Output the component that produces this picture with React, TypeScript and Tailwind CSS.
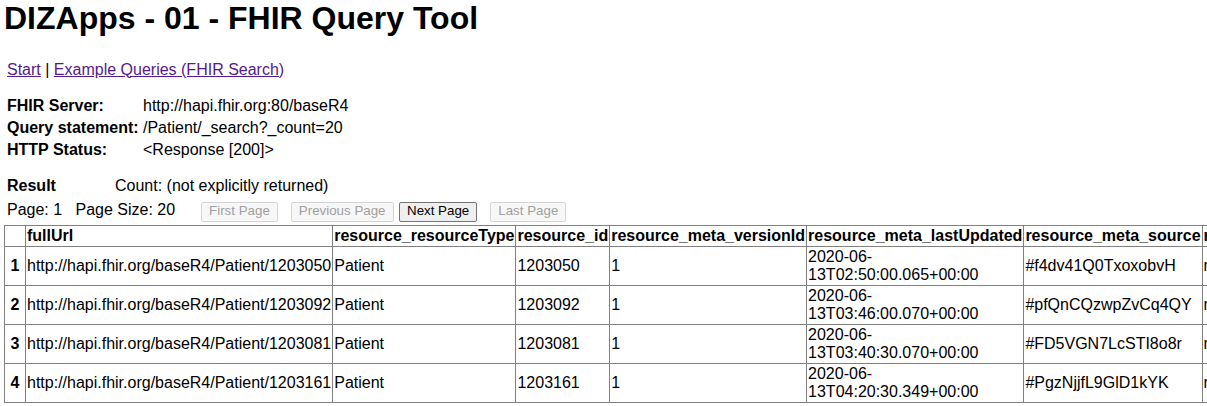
import React from 'react';

const rows = [
  { url: 'http://hapi.fhir.org/baseR4/Patient/1203050', id: '1203050', updated: ['2020-06-', '13T02:50:00.065+00:00'], source: '#f4dv41Q0TxoxobvH' },
  { url: 'http://hapi.fhir.org/baseR4/Patient/1203092', id: '1203092', updated: ['2020-06-', '13T03:46:00.070+00:00'], source: '#pfQnCQzwpZvCq4QY' },
  { url: 'http://hapi.fhir.org/baseR4/Patient/1203081', id: '1203081', updated: ['2020-06-', '13T03:40:30.070+00:00'], source: '#FD5VGN7LcSTI8o8r' },
  { url: 'http://hapi.fhir.org/baseR4/Patient/1203161', id: '1203161', updated: ['2020-06-', '13T04:20:30.349+00:00'], source: '#PgzNjjfL9GlD1kYK' },
];

const headers = [
  'fullUrl',
  'resource_resourceType',
  'resource_id',
  'resource_meta_versionId',
  'resource_meta_lastUpdated',
  'resource_meta_source',
  'resource_gender',
];

const cell = 'border border-[#808080] p-[1px]';

function PageButton({ label, disabled, className = '' }: { label: string; disabled?: boolean; className?: string }) {
  return (
    <button
      disabled={disabled}
      className={`rounded-[2px] border px-[7px] pt-0 pb-[3px] text-[13.33px] leading-[15px] ${
        disabled
          ? 'border-[#d5d5d5] bg-[#f7f7f7] text-[#a0a0a0]'
          : 'border-[#767676] bg-[#efefef] text-black'
      } ${className}`}
    >
      {label}
    </button>
  );
}

export default function App() {
  return (
    <div className="h-screen w-screen overflow-hidden bg-white font-['Liberation_Sans',Arial,sans-serif] text-base leading-[normal] text-black">
      <h1 className="ml-[4px] text-[32px] font-bold leading-[37px]">DIZApps - 01 - FHIR Query Tool</h1>

      {/* nav links */}
      <div className="mt-[23.5px] ml-[7px] leading-[18px]">
        <a href="#" className="text-[#551a8b] underline">Start</a> |{' '}
        <a href="#" className="text-[#551a8b] underline">Example Queries (FHIR Search)</a>
      </div>

      {/* query info */}
      <div className="mt-[16.5px] ml-[7px] grid grid-cols-[136px_auto] leading-[22px]">
        <span className="font-bold">FHIR Server:</span>
        <span>http://hapi.fhir.org:80/baseR4</span>
        <span className="font-bold">Query statement:</span>
        <span>/Patient/_search?_count=20</span>
        <span className="font-bold">HTTP Status:</span>
        <span>&lt;Response [200]&gt;</span>
      </div>

      <div className="mt-[14.3px] ml-[7px] grid grid-cols-[108px_auto] leading-[22px]">
        <span className="font-bold">Result</span>
        <span>Count: (not explicitly returned)</span>
      </div>

      {/* paging */}
      <div className="mt-[3.7px] ml-[7px] flex h-[24px] items-baseline">
        <span>Page: 1</span>
        <span className="ml-[13.3px]">Page Size: 20</span>
        <PageButton label="First Page" disabled className="ml-[26px]" />
        <PageButton label="Previous Page" disabled className="ml-[13px]" />
        <PageButton label="Next Page" className="ml-[5.5px]" />
        <PageButton label="Last Page" disabled className="ml-[13px]" />
      </div>

      <table className="ml-[4px] border-collapse border border-[#808080]">
        <thead>
          <tr>
            <th className={cell}>
              <div className="w-[18px]" />
            </th>
            {headers.map((h) => (
              <th key={h} className={`${cell} text-left font-bold`}>
                {h}
              </th>
            ))}
          </tr>
        </thead>
        <tbody>
          {rows.map((r, i) => (
            <tr key={r.id}>
              <th className={`${cell} text-center font-bold`}>{i + 1}</th>
              <td className={cell}>{r.url}</td>
              <td className={cell}>Patient</td>
              <td className={cell}>{r.id}</td>
              <td className={cell}>1</td>
              <td className={cell}>
                {r.updated[0]}
                <wbr />
                {r.updated[1]}
              </td>
              <td className={cell}>{r.source}</td>
              <td className={cell}>male</td>
            </tr>
          ))}
        </tbody>
      </table>
    </div>
  );
}
